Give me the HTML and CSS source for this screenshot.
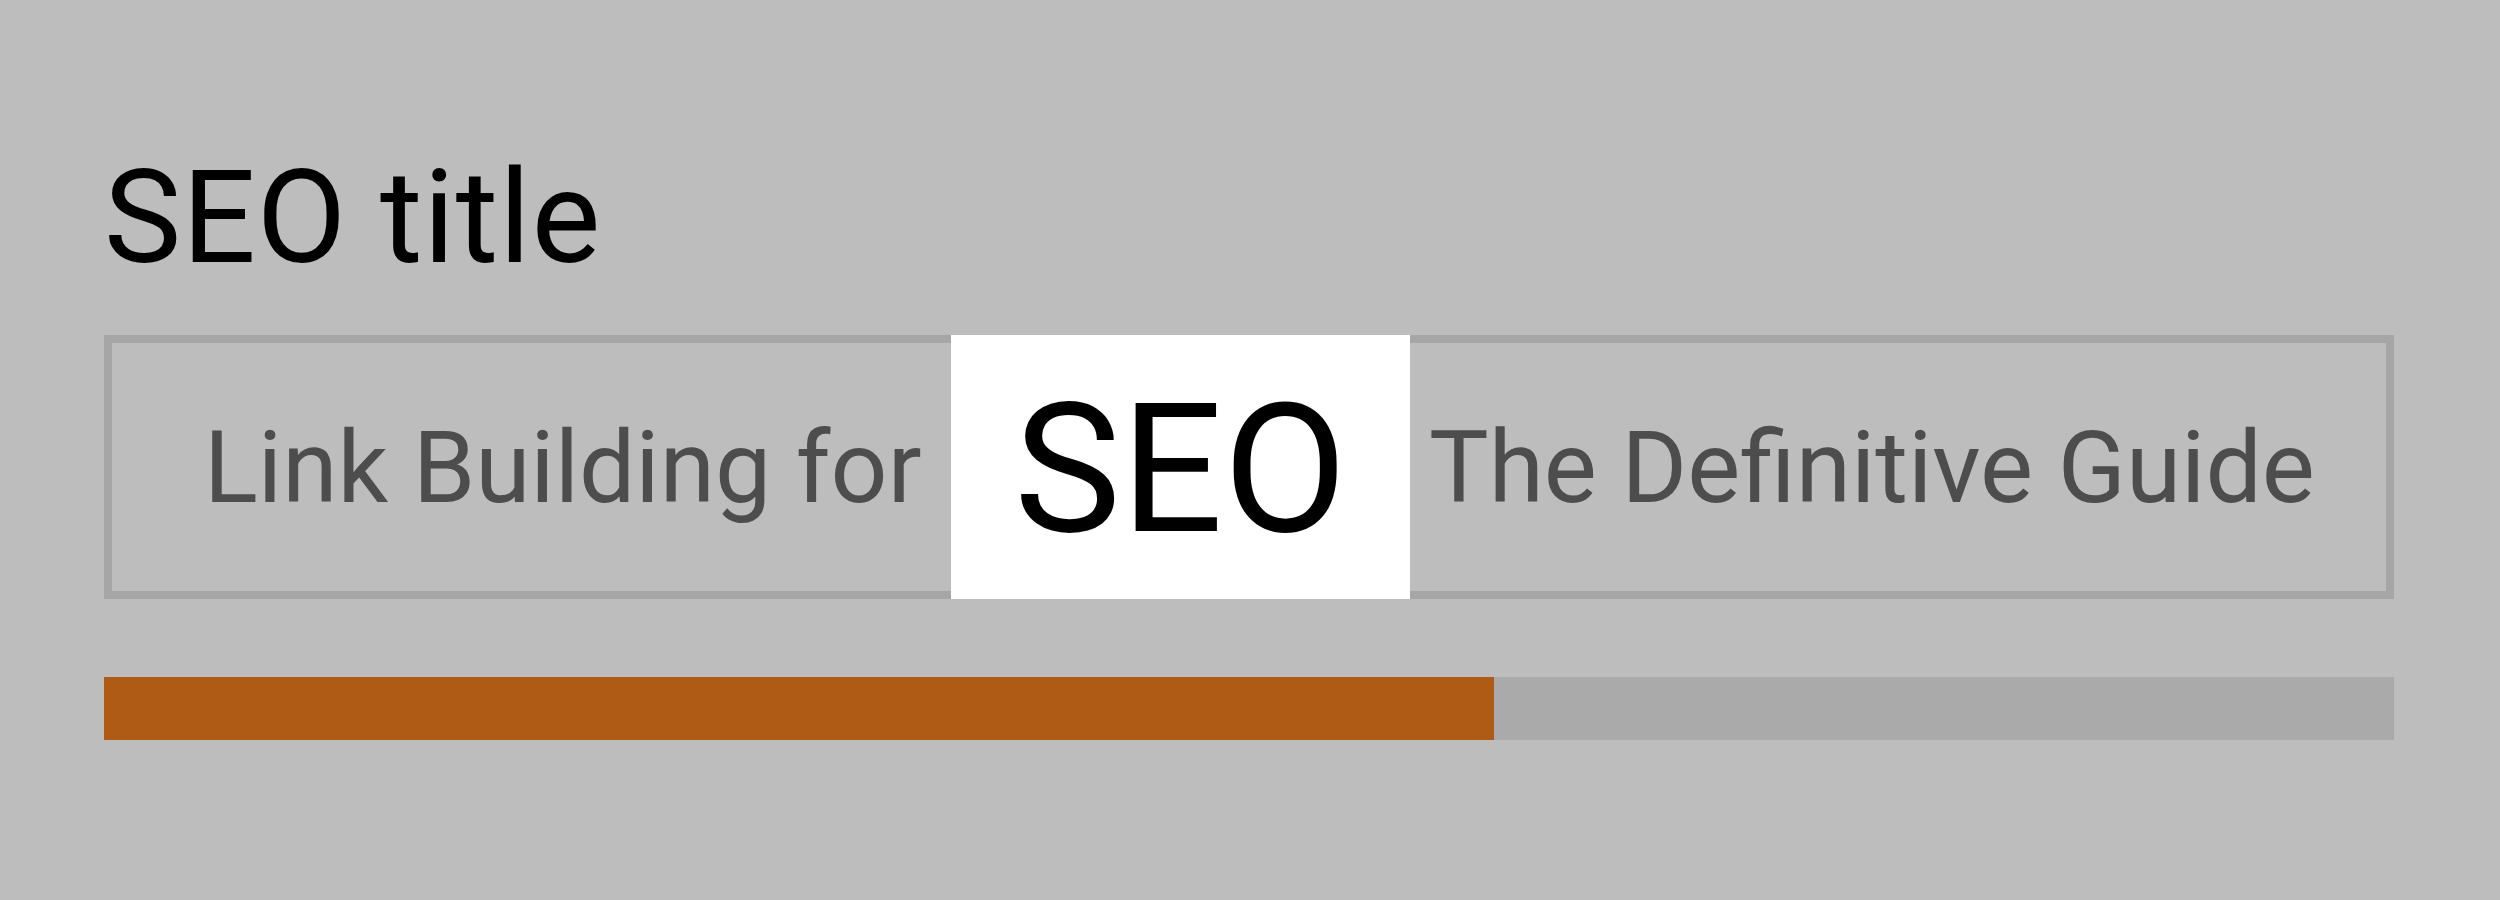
FILE: index.html
```html
<!DOCTYPE html>
<html lang="en">
<head>
    <meta charset="UTF-8">
    <meta name="viewport" content="width=device-width, initial-scale=1.0">
    <title>SEO title</title>
    <link rel="stylesheet" href="styles.css">
</head>
<body>
    <div class="container">
        <h1 class="heading">SEO title</h1>

        <div class="title-box">
            <span class="title-part before">Link Building for</span>
            <span class="keyword">SEO</span>
            <span class="title-part after">The Definitive Guide</span>
        </div>

        <div class="meter">
            <div class="meter-fill" style="width: 60.7%"></div>
        </div>
    </div>
</body>
</html>
```

FILE: styles.css
```css
body {
    margin: 0;
    background: #bdbdbd;
    font-family: Roboto, "Liberation Sans", Arial, sans-serif;
}
.container {
    padding: 141px 106px 0 104px;
}
.heading {
    margin: 0;
    font-size: 130px;
    font-weight: 400;
    letter-spacing: 0.8px;
    line-height: normal;
    color: #000;
}
.title-box {
    margin-top: 41px;
    height: 264px;
    box-sizing: border-box;
    border: 8px solid #a6a6a6;
    display: flex;
    align-items: center;
}
.title-part {
    font-size: 100px;
    color: #4d4d4d;
    white-space: nowrap;
}
.before {
    width: 839px;
    box-sizing: border-box;
    padding-left: 92px;
}
.after {
    padding-left: 19px;
}
.keyword {
    align-self: stretch;
    margin: -8px 0;
    width: 459px;
    background: #fff;
    color: #000;
    font-size: 180px;
    display: flex;
    align-items: center;
    justify-content: center;
    padding-top: 4px;
    box-sizing: border-box;
}
.meter {
    margin-top: 78px;
    height: 63px;
    background: #aaaaaa;
}
.meter-fill {
    height: 100%;
    background: #b05b15;
}
```
